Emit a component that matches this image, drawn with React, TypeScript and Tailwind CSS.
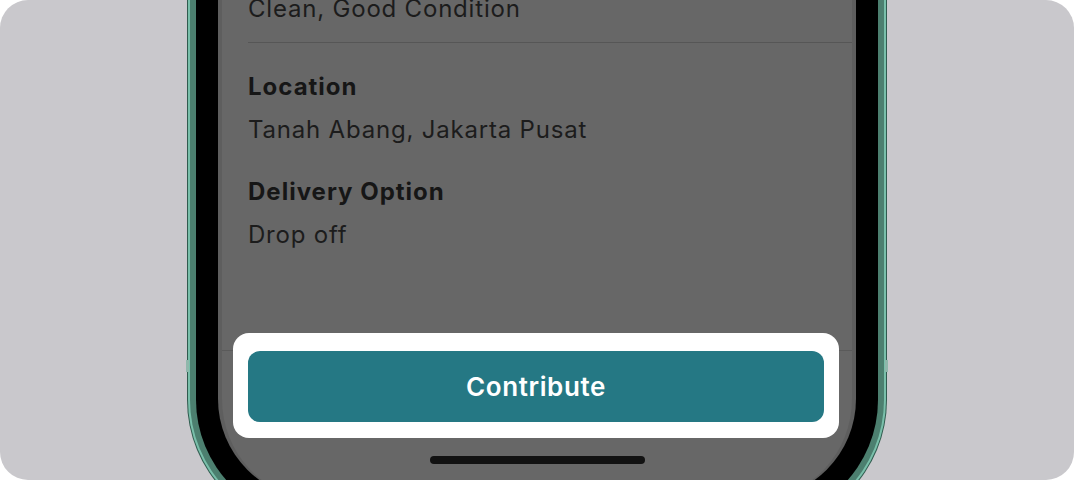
import React from 'react';

const details = [
  { label: 'Location', value: 'Tanah Abang, Jakarta Pusat' },
  { label: 'Delivery Option', value: 'Drop off' },
];

const App: React.FC = () => {
  return (
    <div className="w-[1074px] h-[480px] bg-white font-['Inter',sans-serif]">
      <div className="h-full rounded-[28px] bg-[#c9c8cc] overflow-hidden flex justify-center">
        {/* phone frame */}
        <div className="relative shrink-0 w-[700px] h-[590px] -mt-[60px] rounded-b-[130px] bg-[#2f5b4e] px-[1px] pb-[1px]">
          <div className="h-full rounded-b-[129px] bg-[#79bfaa] px-[2px] pb-[2px]">
            <div className="h-full rounded-b-[127px] bg-[#4c7f6f] px-[6px] pb-[6px]">
              <div className="h-full rounded-b-[121px] bg-black px-[22px] pb-[22px] pt-[31px]">
                {/* screen */}
                <div className="h-full rounded-b-[100px] bg-[#676767] border-x-4 border-[#5e5e5e] overflow-hidden flex flex-col">
                  <div className="pt-[22px] pl-[26px]">
                    <div className="border-b border-[#565656] pb-[17px]">
                      <p className="text-[24px] leading-[32px] tracking-[0.8px] text-[#1c1c1c]">Clean, Good Condition</p>
                    </div>
                    <div className="pt-[28px]">
                      {details.map((d, i) => (
                        <div key={d.label} className={i > 0 ? 'mt-[30px]' : ''}>
                          <p className="text-[24px] leading-[32px] tracking-[1px] font-bold text-[#161616]">{d.label}</p>
                          <p className="mt-[11px] text-[24px] leading-[32px] tracking-[0.8px] text-[#1c1c1c]">{d.value}</p>
                        </div>
                      ))}
                    </div>
                  </div>

                  {/* footer */}
                  <div className="relative mt-[99px] border-t border-[#5a5a5a]">
                    <div className="absolute left-[11px] right-[13px] -top-[18px] h-[105px] rounded-[16px] bg-white" />
                    <button className="relative mx-[26px] w-[576px] h-[71px] rounded-[12px] bg-[#257884] text-white text-[26px] tracking-[0.6px] font-semibold">
                      Contribute
                    </button>
                    <div className="mt-[34px] mx-auto w-[215px] h-[8px] rounded-full bg-[#121212]" />
                  </div>
                </div>
              </div>
            </div>
          </div>
          {/* side buttons */}
          <div className="absolute -left-[1px] top-[420px] w-[3px] h-[12px] bg-[#8fb7ab]" />
          <div className="absolute -right-[1px] top-[420px] w-[3px] h-[12px] bg-[#8fb7ab]" />
        </div>
      </div>
    </div>
  );
};

export default App;
